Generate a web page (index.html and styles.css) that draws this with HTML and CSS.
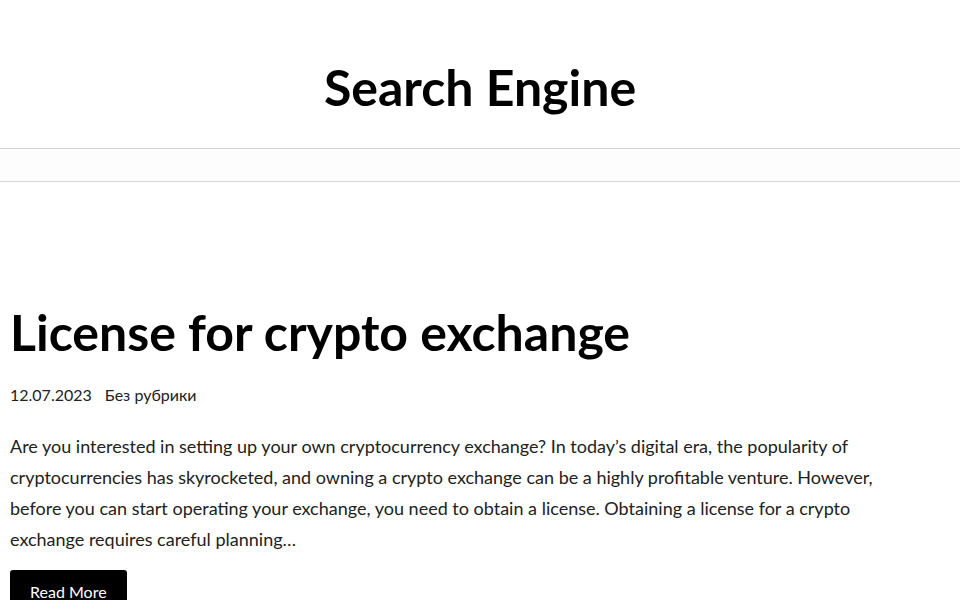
FILE: index.html
```html
<!DOCTYPE html>
<html lang="en">
<head>
  <meta charset="UTF-8">
  <meta name="viewport" content="width=device-width, initial-scale=1.0">
  <title>Search Engine</title>
  <link rel="stylesheet" href="styles.css">
</head>
<body>
  <header class="site-header">
    <div class="site-title">Search Engine</div>
  </header>

  <nav class="site-nav"></nav>

  <main class="posts">
    <article class="post">
      <h2 class="post-title">License for crypto exchange</h2>
      <div class="post-meta">
        <span class="post-date">12.07.2023</span>
        <span class="post-cat">Без рубрики</span>
      </div>
      <p class="post-excerpt">Are you interested in setting up your own cryptocurrency exchange? In today’s digital era, the popularity of cryptocurrencies has skyrocketed, and owning a crypto exchange can be a highly profitable venture. However, before you can start operating your exchange, you need to obtain a license. Obtaining a license for a crypto exchange requires careful planning…</p>
      <a class="read-more" href="#">Read More</a>
    </article>
  </main>
</body>
</html>
```

FILE: styles.css
```css
body {
  margin: 0;
  background: #fff;
  color: #111;
  font-family: Lato, "Noto Sans", sans-serif;
}
.site-header {
  height: 148px;
  display: flex;
  align-items: center;
  justify-content: center;
  border-bottom: 1px solid #d4d4d4;
}
.site-title {
  font-size: 50px;
  font-weight: 700;
  color: #000;
  margin-top: 26px;
}
.site-nav {
  height: 32px;
  background: #fdfdfd;
  border-bottom: 1px solid #d4d4d4;
}
.posts {
  padding: 118px 10px 0;
}
.post-title {
  margin: 0;
  font-size: 50px;
  font-weight: 700;
  line-height: 64px;
  color: #000;
}
.post-meta {
  margin-top: 21px;
  font-size: 16px;
  color: #222;
  display: flex;
  gap: 13px;
}
.post-excerpt {
  margin: 27px 0 0;
  font-size: 18px;
  line-height: 31px;
  color: #222;
  max-width: 900px;
}
.read-more {
  display: inline-block;
  margin-top: 15px;
  padding: 12px 20px;
  background: #000;
  color: #fff;
  font-size: 16px;
  border-radius: 3px;
  text-decoration: none;
}
```
